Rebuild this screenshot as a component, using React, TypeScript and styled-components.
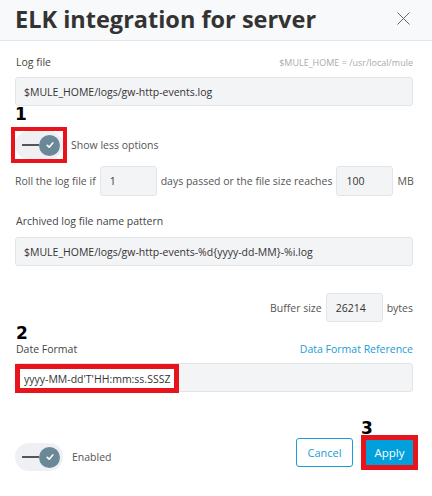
import React from "react";
import styled, { createGlobalStyle } from "styled-components";

const Global = createGlobalStyle`
  html, body { margin: 0; padding: 0; background: #ffffff; }
  body { font-family: "Open Sans", "Noto Sans", sans-serif; color: #444; }
  * { box-sizing: border-box; }
`;

const Dialog = styled.div`
  width: 432px;
  height: 496px;
  background: #fff;
  display: flex;
  flex-direction: column;
`;

const Header = styled.div`
  height: 41px;
  background: #f8f9fa;
  border-bottom: 1px solid #e4e6e9;
  display: flex;
  align-items: center;
  justify-content: space-between;
  padding: 0 22px 0 15px;
`;

const Title = styled.h1`
  margin: 0;
  font-size: 23.5px;
  font-weight: 700;
  color: #333;
  line-height: 32px;
  margin-top: -2px;
`;

const Close = styled.button`
  border: 0;
  background: none;
  padding: 0;
  width: 13px;
  height: 13px;
  display: flex;
  margin-top: -3px;
`;

const Body = styled.div`
  padding: 13px 19px 0 15px;
  display: flex;
  flex-direction: column;
`;

const FieldHead = styled.div<{ $gap?: number }>`
  display: flex;
  justify-content: space-between;
  align-items: center;
  height: 16px;
  margin-top: ${(p) => p.$gap ?? 0}px;
  position: relative;
`;

const Label = styled.span`
  font-size: 10.5px;
  color: #444;
  padding-left: 1px;
`;

const Hint = styled.span`
  font-size: 9px;
  color: #aaa;
`;

const LinkText = styled.a`
  font-size: 10.5px;
  color: #1b9bd7;
  text-decoration: none;
`;

const TextInput = styled.div<{ $gap?: number; $flush?: boolean }>`
  height: 29px;
  margin-top: ${(p) => p.$gap ?? 0}px;
  background: #f3f4f6;
  border: 1px solid #e2e4e7;
  border-radius: 3px;
  display: flex;
  align-items: ${(p) => (p.$flush ? "stretch" : "center")};
  padding: ${(p) => (p.$flush ? "0" : "0 0 0 8px")};
  font-size: 10.5px;
  color: #333;
`;

const Highlight = styled.span`
  display: flex;
  align-items: center;
  margin: 0 0 -2px -1px;
  border: 5px solid #e8141c;
  background: #fff;
  padding: 0 4px 0 4px;
`;

const ToggleRow = styled.div<{ $gap?: number }>`
  display: flex;
  align-items: center;
  gap: 8px;
  margin-top: ${(p) => p.$gap ?? 0}px;
  position: relative;
`;

const Frame = styled.div`
  display: flex;
  margin: -4px;
  border: 4px solid #e8141c;
`;

const Pill = styled.div`
  width: 48px;
  height: 28px;
  border-radius: 14px;
  background: #eef0f3;
  display: flex;
  align-items: center;
  padding: 0 3px 0 7px;
`;

const Track = styled.span`
  width: 17px;
  height: 1.5px;
  background: #555;
`;

const Knob = styled.span`
  width: 21px;
  height: 21px;
  border-radius: 50%;
  background: #6a8898;
  display: flex;
  align-items: center;
  justify-content: center;
`;

const ToggleText = styled.span`
  font-size: 10.5px;
  color: #555;
`;

const InlineRow = styled.div<{ $gap?: number; $right?: boolean }>`
  display: flex;
  align-items: center;
  justify-content: ${(p) => (p.$right ? "flex-end" : "space-between")};
  gap: 4px;
  margin-top: ${(p) => p.$gap ?? 0}px;
  font-size: 10.5px;
  color: #555;
  white-space: nowrap;
`;

const SmallInput = styled.div<{ $h?: number }>`
  flex: none;
  width: 57px;
  height: ${(p) => p.$h ?? 30}px;
  background: #f3f4f6;
  border: 1px solid #e2e4e7;
  border-radius: 3px;
  display: flex;
  align-items: center;
  padding-left: 9px;
  font-size: 10.5px;
  color: #333;
`;

const Group = styled.div`
  position: relative;
  display: flex;
  flex-direction: column;
`;

const Marker = styled.span<{ $top: number; $left: number }>`
  position: absolute;
  top: ${(p) => p.$top}px;
  left: ${(p) => p.$left}px;
  font-family: "DejaVu Sans", Verdana, sans-serif;
  font-weight: 700;
  font-size: 17px;
  line-height: 20px;
  color: #000;
`;

const Footer = styled.div`
  display: flex;
  justify-content: space-between;
  align-items: flex-start;
  margin-top: 46px;
`;

const LeftFoot = styled(ToggleRow)`
  margin-top: 5px;
  gap: 9px;
`;

const Buttons = styled.div`
  display: flex;
  align-items: center;
  gap: 13px;
`;

const ButtonWrap = styled.div`
  position: relative;
  display: flex;
`;

const Button = styled.button<{ $primary?: boolean }>`
  font-family: "Open Sans", sans-serif;
  font-size: 11px;
  border-radius: 3px;
  cursor: pointer;
  ${(p) =>
    p.$primary
      ? `
    width: 47px; height: 25px; background: #00a0dd; color: #fff; border: 0;
    border-radius: 0; outline: 5px solid #e8141c; padding: 0; font-size: 11.5px;
  `
      : `
    width: 57px; height: 29px; background: #fff; color: #1b9bd7; border: 1px solid #1b9bd7; padding: 0;
  `}
`;

const Check = () => (
  <svg width="10" height="10" viewBox="0 0 10 10">
    <path d="M2.2 5.3 L4.2 7.2 L7.8 2.9" fill="none" stroke="#fff" strokeWidth="1.6" strokeLinecap="round" strokeLinejoin="round" />
  </svg>
);

const Toggle = () => (
  <Pill>
    <Track />
    <Knob>
      <Check />
    </Knob>
  </Pill>
);

export default function App() {
  return (
    <>
      <Global />
      <Dialog>
        <Header>
          <Title>ELK integration for server</Title>
          <Close aria-label="close">
            <svg width="13" height="13" viewBox="0 0 13 13">
              <path d="M0.5 0.5 L12.5 12.5 M12.5 0.5 L0.5 12.5" stroke="#666" strokeWidth="1" fill="none" />
            </svg>
          </Close>
        </Header>
        <Body>
          <FieldHead>
            <Label>Log file</Label>
            <Hint>$MULE_HOME = /usr/local/mule</Hint>
          </FieldHead>
          <TextInput $gap={7}>$MULE_HOME/logs/gw-http-events.log</TextInput>

          <ToggleRow $gap={25}>
            <Marker $top={-27} $left={0}>1</Marker>
            <Frame>
              <Toggle />
            </Frame>
            <ToggleText>Show less options</ToggleText>
          </ToggleRow>

          <InlineRow $gap={7}>
            <span>Roll the log file if</span>
            <SmallInput>1</SmallInput>
            <span>days passed or the file size reaches</span>
            <SmallInput>100</SmallInput>
            <span>MB</span>
          </InlineRow>

          <FieldHead $gap={17}>
            <Label>Archived log file name pattern</Label>
          </FieldHead>
          <TextInput $gap={8}>$MULE_HOME/logs/gw-http-events-%d{"{"}yyyy-dd-MM{"}"}-%i.log</TextInput>

          <InlineRow $gap={27} $right>
            <span>Buffer size</span>
            <SmallInput $h={29}>26214</SmallInput>
            <span>bytes</span>
          </InlineRow>

          <Group>
            <FieldHead $gap={19}>
              <Marker $top={-18} $left={1}>2</Marker>
              <Label>Date Format</Label>
              <LinkText href="#">Data Format Reference</LinkText>
            </FieldHead>
            <TextInput $gap={6} $flush>
              <Highlight>yyyy-MM-dd'T'HH:mm:ss.SSSZ</Highlight>
            </TextInput>
          </Group>

          <Footer>
            <LeftFoot>
              <Toggle />
              <ToggleText>Enabled</ToggleText>
            </LeftFoot>
            <Buttons>
              <Button>Cancel</Button>
              <ButtonWrap>
                <Marker $top={-22} $left={-5}>3</Marker>
                <Button $primary>Apply</Button>
              </ButtonWrap>
            </Buttons>
          </Footer>
        </Body>
      </Dialog>
    </>
  );
}
